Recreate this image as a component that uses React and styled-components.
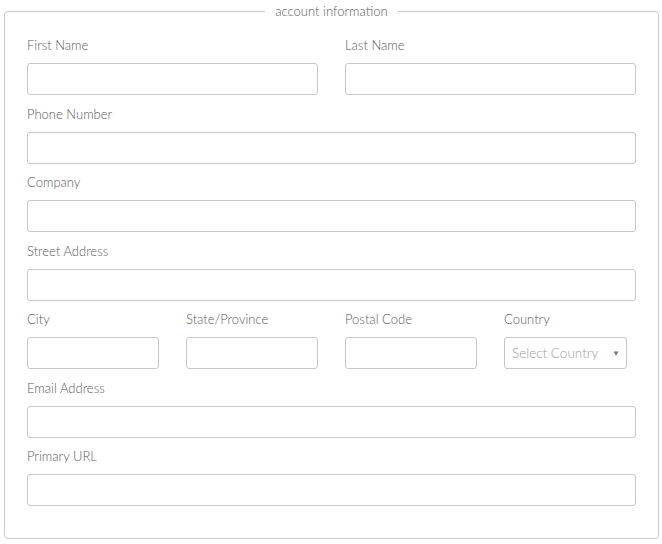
import React from 'react'
import styled, {createGlobalStyle} from 'styled-components'

const GlobalStyle = createGlobalStyle`
  html, body {
    margin: 0;
    padding: 0;
    background: #fff;
    font-family: Lato, "Open Sans", "Liberation Sans", sans-serif;
  }
  * { box-sizing: border-box; }
`

const Page = styled.div`
  padding: 3px 4px 0 4px;
`

const Fieldset = styled.fieldset`
  margin: 0;
  width: 655px;
  height: 536px;
  border: 1px solid #c9c9c9;
  border-radius: 4px;
  padding: 17px 22px 0 22px;
`

const Legend = styled.legend`
  margin: 0 auto;
  padding: 0 10px;
  font-size: 13px;
  font-weight: 300;
  color: #5a5a5a;
  line-height: 16px;
`

const Row = styled.div`
  display: grid;
  grid-template-columns: repeat(${({cols}) => cols || 1}, 1fr);
  column-gap: 27px;
  margin-bottom: 9.5px;
`

const Field = styled.div`
  display: flex;
  flex-direction: column;
`

const Label = styled.label`
  font-size: 13px;
  font-weight: 300;
  color: #5a5a5a;
  line-height: 18px;
  margin-bottom: 9px;
`

const Input = styled.input`
  height: 32px;
  width: 100%;
  border: 1px solid #c6c6c6;
  border-radius: 3px;
  background: #fff;
  outline: none;
  padding: 0 8px;
  font-family: inherit;
`

const SelectBox = styled.div`
  position: relative;
  width: 123px;
  height: 32px;
  border: 1px solid #c6c6c6;
  border-radius: 3px;
  display: flex;
  align-items: center;
  padding-left: 7px;
  font-size: 13.5px;
  font-weight: 300;
  color: #9a9a9a;

  span.arrow {
    position: absolute;
    right: 6px;
    top: 10px;
    font-size: 8px;
    color: #777;
  }
`

const rows = [
  ['First Name', 'Last Name'],
  ['Phone Number'],
  ['Company'],
  ['Street Address'],
  ['City', 'State/Province', 'Postal Code', 'Country'],
  ['Email Address'],
  ['Primary URL'],
]

const App = () => {
  return (
    <Page>
      <GlobalStyle />
      <Fieldset>
        <Legend>account information</Legend>
        {rows.map((row, i) => (
          <Row key={i} cols={row.length}>
            {row.map(name => (
              <Field key={name}>
                <Label>{name}</Label>
                {name === 'Country' ? (
                  <SelectBox>
                    Select Country
                    <span className='arrow'>▼</span>
                  </SelectBox>
                ) : (
                  <Input type='text' />
                )}
              </Field>
            ))}
          </Row>
        ))}
      </Fieldset>
    </Page>
  )
}

export default App
